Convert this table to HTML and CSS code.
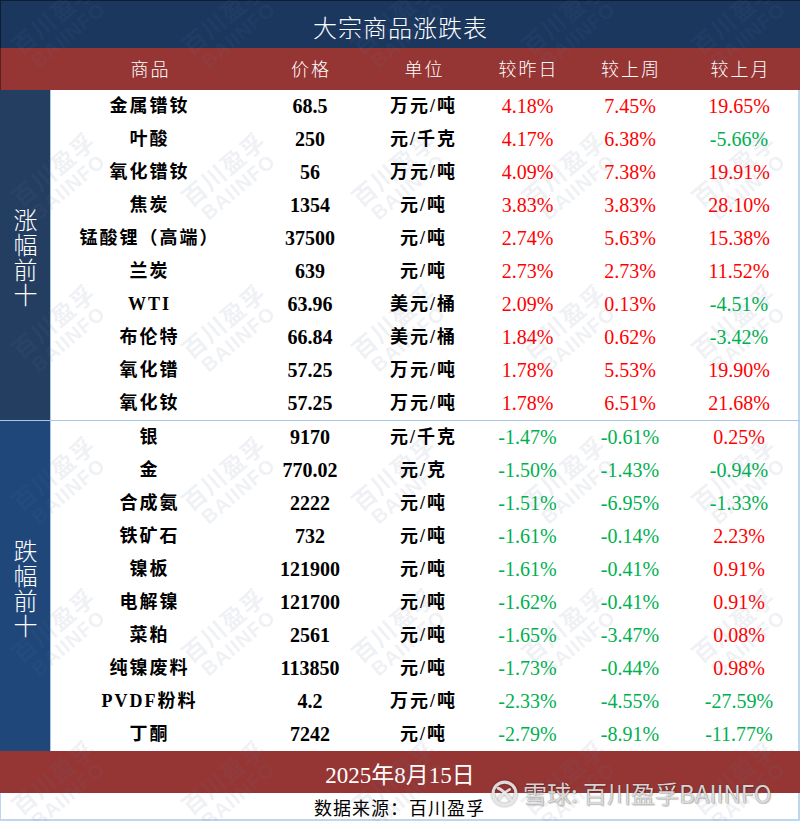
FILE: index.html
```html
<!DOCTYPE html>
<html lang="zh-CN">
<head>
<meta charset="utf-8">
<title>大宗商品涨跌表</title>
<link rel="stylesheet" href="styles.css">
</head>
<body>
<div class="sheet">
  <div class="title">大宗商品涨跌表</div>
  <div class="head">
    <div></div><div>商品</div><div>价格</div><div>单位</div><div>较昨日</div><div>较上周</div><div>较上月</div>
  </div>

  <div class="group up">
    <div class="label"><span class="label-text">涨幅前十</span></div>
    <div class="rows">
      <div class="row"><div class="name">金属镨钕</div><div class="price">68.5</div><div class="unit">万元/吨</div><div class="pct r">4.18%</div><div class="pct r">7.45%</div><div class="pct r">19.65%</div></div>
      <div class="row"><div class="name">叶酸</div><div class="price">250</div><div class="unit">元/千克</div><div class="pct r">4.17%</div><div class="pct r">6.38%</div><div class="pct g">-5.66%</div></div>
      <div class="row"><div class="name">氧化镨钕</div><div class="price">56</div><div class="unit">万元/吨</div><div class="pct r">4.09%</div><div class="pct r">7.38%</div><div class="pct r">19.91%</div></div>
      <div class="row"><div class="name">焦炭</div><div class="price">1354</div><div class="unit">元/吨</div><div class="pct r">3.83%</div><div class="pct r">3.83%</div><div class="pct r">28.10%</div></div>
      <div class="row"><div class="name">锰酸锂（高端）</div><div class="price">37500</div><div class="unit">元/吨</div><div class="pct r">2.74%</div><div class="pct r">5.63%</div><div class="pct r">15.38%</div></div>
      <div class="row"><div class="name">兰炭</div><div class="price">639</div><div class="unit">元/吨</div><div class="pct r">2.73%</div><div class="pct r">2.73%</div><div class="pct r">11.52%</div></div>
      <div class="row"><div class="name">WTI</div><div class="price">63.96</div><div class="unit">美元/桶</div><div class="pct r">2.09%</div><div class="pct r">0.13%</div><div class="pct g">-4.51%</div></div>
      <div class="row"><div class="name">布伦特</div><div class="price">66.84</div><div class="unit">美元/桶</div><div class="pct r">1.84%</div><div class="pct r">0.62%</div><div class="pct g">-3.42%</div></div>
      <div class="row"><div class="name">氧化镨</div><div class="price">57.25</div><div class="unit">万元/吨</div><div class="pct r">1.78%</div><div class="pct r">5.53%</div><div class="pct r">19.90%</div></div>
      <div class="row"><div class="name">氧化钕</div><div class="price">57.25</div><div class="unit">万元/吨</div><div class="pct r">1.78%</div><div class="pct r">6.51%</div><div class="pct r">21.68%</div></div>
    </div>
  </div>

  <div class="group down">
    <div class="label"><span class="label-text">跌幅前十</span></div>
    <div class="rows">
      <div class="row"><div class="name">银</div><div class="price">9170</div><div class="unit">元/千克</div><div class="pct g">-1.47%</div><div class="pct g">-0.61%</div><div class="pct r">0.25%</div></div>
      <div class="row"><div class="name">金</div><div class="price">770.02</div><div class="unit">元/克</div><div class="pct g">-1.50%</div><div class="pct g">-1.43%</div><div class="pct g">-0.94%</div></div>
      <div class="row"><div class="name">合成氨</div><div class="price">2222</div><div class="unit">元/吨</div><div class="pct g">-1.51%</div><div class="pct g">-6.95%</div><div class="pct g">-1.33%</div></div>
      <div class="row"><div class="name">铁矿石</div><div class="price">732</div><div class="unit">元/吨</div><div class="pct g">-1.61%</div><div class="pct g">-0.14%</div><div class="pct r">2.23%</div></div>
      <div class="row"><div class="name">镍板</div><div class="price">121900</div><div class="unit">元/吨</div><div class="pct g">-1.61%</div><div class="pct g">-0.41%</div><div class="pct r">0.91%</div></div>
      <div class="row"><div class="name">电解镍</div><div class="price">121700</div><div class="unit">元/吨</div><div class="pct g">-1.62%</div><div class="pct g">-0.41%</div><div class="pct r">0.91%</div></div>
      <div class="row"><div class="name">菜粕</div><div class="price">2561</div><div class="unit">元/吨</div><div class="pct g">-1.65%</div><div class="pct g">-3.47%</div><div class="pct r">0.08%</div></div>
      <div class="row"><div class="name">纯镍废料</div><div class="price">113850</div><div class="unit">元/吨</div><div class="pct g">-1.73%</div><div class="pct g">-0.44%</div><div class="pct r">0.98%</div></div>
      <div class="row"><div class="name">PVDF粉料</div><div class="price">4.2</div><div class="unit">万元/吨</div><div class="pct g">-2.33%</div><div class="pct g">-4.55%</div><div class="pct g">-27.59%</div></div>
      <div class="row"><div class="name">丁酮</div><div class="price">7242</div><div class="unit">元/吨</div><div class="pct g">-2.79%</div><div class="pct g">-8.91%</div><div class="pct g">-11.77%</div></div>
    </div>
  </div>

  <div class="footer">2025年8月15日</div>
  <div class="source">数据来源：百川盈孚</div>

  <div class="wm" aria-hidden="true">
    <div class="wm-cell"><div class="wm-mark"><div class="wm-cn">百川盈孚</div><div class="wm-en">BAIINFO</div></div></div>
    <div class="wm-cell"><div class="wm-mark"><div class="wm-cn">百川盈孚</div><div class="wm-en">BAIINFO</div></div></div>
    <div class="wm-cell"><div class="wm-mark"><div class="wm-cn">百川盈孚</div><div class="wm-en">BAIINFO</div></div></div>
    <div class="wm-cell"><div class="wm-mark"><div class="wm-cn">百川盈孚</div><div class="wm-en">BAIINFO</div></div></div>
    <div class="wm-cell"><div class="wm-mark"><div class="wm-cn">百川盈孚</div><div class="wm-en">BAIINFO</div></div></div>
    <div class="wm-cell"><div class="wm-mark"><div class="wm-cn">百川盈孚</div><div class="wm-en">BAIINFO</div></div></div>
    <div class="wm-cell"><div class="wm-mark"><div class="wm-cn">百川盈孚</div><div class="wm-en">BAIINFO</div></div></div>
    <div class="wm-cell"><div class="wm-mark"><div class="wm-cn">百川盈孚</div><div class="wm-en">BAIINFO</div></div></div>
    <div class="wm-cell"><div class="wm-mark"><div class="wm-cn">百川盈孚</div><div class="wm-en">BAIINFO</div></div></div>
    <div class="wm-cell"><div class="wm-mark"><div class="wm-cn">百川盈孚</div><div class="wm-en">BAIINFO</div></div></div>
    <div class="wm-cell"><div class="wm-mark"><div class="wm-cn">百川盈孚</div><div class="wm-en">BAIINFO</div></div></div>
    <div class="wm-cell"><div class="wm-mark"><div class="wm-cn">百川盈孚</div><div class="wm-en">BAIINFO</div></div></div>
    <div class="wm-cell"><div class="wm-mark"><div class="wm-cn">百川盈孚</div><div class="wm-en">BAIINFO</div></div></div>
    <div class="wm-cell"><div class="wm-mark"><div class="wm-cn">百川盈孚</div><div class="wm-en">BAIINFO</div></div></div>
    <div class="wm-cell"><div class="wm-mark"><div class="wm-cn">百川盈孚</div><div class="wm-en">BAIINFO</div></div></div>
    <div class="wm-cell"><div class="wm-mark"><div class="wm-cn">百川盈孚</div><div class="wm-en">BAIINFO</div></div></div>
    <div class="wm-cell"><div class="wm-mark"><div class="wm-cn">百川盈孚</div><div class="wm-en">BAIINFO</div></div></div>
    <div class="wm-cell"><div class="wm-mark"><div class="wm-cn">百川盈孚</div><div class="wm-en">BAIINFO</div></div></div>
    <div class="wm-cell"><div class="wm-mark"><div class="wm-cn">百川盈孚</div><div class="wm-en">BAIINFO</div></div></div>
    <div class="wm-cell"><div class="wm-mark"><div class="wm-cn">百川盈孚</div><div class="wm-en">BAIINFO</div></div></div>
    <div class="wm-cell"><div class="wm-mark"><div class="wm-cn">百川盈孚</div><div class="wm-en">BAIINFO</div></div></div>
    <div class="wm-cell"><div class="wm-mark"><div class="wm-cn">百川盈孚</div><div class="wm-en">BAIINFO</div></div></div>
    <div class="wm-cell"><div class="wm-mark"><div class="wm-cn">百川盈孚</div><div class="wm-en">BAIINFO</div></div></div>
    <div class="wm-cell"><div class="wm-mark"><div class="wm-cn">百川盈孚</div><div class="wm-en">BAIINFO</div></div></div>
    <div class="wm-cell"><div class="wm-mark"><div class="wm-cn">百川盈孚</div><div class="wm-en">BAIINFO</div></div></div>
    <div class="wm-cell"><div class="wm-mark"><div class="wm-cn">百川盈孚</div><div class="wm-en">BAIINFO</div></div></div>
    <div class="wm-cell"><div class="wm-mark"><div class="wm-cn">百川盈孚</div><div class="wm-en">BAIINFO</div></div></div>
    <div class="wm-cell"><div class="wm-mark"><div class="wm-cn">百川盈孚</div><div class="wm-en">BAIINFO</div></div></div>
    <div class="wm-cell"><div class="wm-mark"><div class="wm-cn">百川盈孚</div><div class="wm-en">BAIINFO</div></div></div>
    <div class="wm-cell"><div class="wm-mark"><div class="wm-cn">百川盈孚</div><div class="wm-en">BAIINFO</div></div></div>
  </div>

  <div class="xq">
    <svg class="xq-logo" viewBox="0 0 26 26" width="27" height="27">
      <circle cx="13" cy="13" r="11" fill="none" stroke="currentColor" stroke-width="3"/>
      <path d="M7 8 C11 9 14 13 19 19" fill="none" stroke="currentColor" stroke-width="3" stroke-linecap="round"/>
      <path d="M8 18 C10 14 13 12 18 9" fill="none" stroke="currentColor" stroke-width="2.5" stroke-linecap="round"/>
    </svg>
    <span class="xq-text">雪球: 百川盈孚BAIINFO</span>
  </div>
</div>
</body>
</html>
```

FILE: styles.css
```css
* { box-sizing: border-box; }

html, body {
  margin: 0;
  padding: 0;
  background: #ffffff;
}

.sheet {
  position: relative;
  width: 800px;
  height: 821px;
  overflow: hidden;
  background: #ffffff;
  font-family: "Liberation Serif", "Noto Sans CJK SC", serif;
  color: #000;
}

.title {
  height: 48px;
  border-top: 1px solid #0d1f36;
  border-left: 1px solid #0d1f36;
  background: #1b375e;
  color: #ffffff;
  font-family: "Noto Sans CJK SC", sans-serif;
  font-weight: 300;
  font-size: 24px;
  letter-spacing: 1px;
  display: flex;
  align-items: center;
  justify-content: center;
  padding-top: 4px;
}

.head {
  height: 42px;
  background: #963634;
  border-left: 1px solid #5a1f1e;
  color: #ffffff;
  font-family: "Noto Sans CJK SC", sans-serif;
  font-weight: 300;
  font-size: 18px;
  letter-spacing: 2px;
  display: grid;
  grid-template-columns: 51px 197px 124px 103px 105px 100px 1fr;
  align-items: center;
  text-align: center;
  padding-bottom: 3px;
}

.group {
  display: grid;
  grid-template-columns: 51px 1fr;
}

.up {
  border-bottom: 1px solid #a9c8e8;
}

.label {
  background: #243e62;
  color: #ffffff;
  border-right: 1px solid #a9c8e8;
  display: flex;
  align-items: center;
  justify-content: center;
}

.label-text {
  writing-mode: vertical-rl;
  text-orientation: upright;
  font-family: "Noto Sans CJK SC", sans-serif;
  font-weight: 300;
  font-size: 24px;
  letter-spacing: 1px;
  line-height: 30px;
  padding-top: 6px;
}

.down .label {
  background: #1f477a;
}

.rows {
  border-right: 2px solid #bdd7ee;
}

.row {
  height: 33px;
  display: grid;
  grid-template-columns: 197px 124px 103px 105px 100px 1fr;
  align-items: center;
  text-align: center;
  font-size: 20px;
  line-height: 33px;
}

.name,
.unit {
  font-weight: bold;
  font-size: 18px;
  letter-spacing: 2px;
}

.price {
  font-weight: bold;
  font-size: 20px;
}

.pct {
  font-size: 20px;
  font-weight: normal;
}

.r { color: #ff0000; }
.g { color: #00b050; }

.footer {
  height: 42px;
  background: #963634;
  color: #ffffff;
  font-size: 23px;
  display: flex;
  align-items: center;
  justify-content: center;
  padding-top: 1px;
}

.source {
  height: 28px;
  border-bottom: 2px solid #bdd7ee;
  border-right: 2px solid #bdd7ee;
  border-left: 1px solid #bdd7ee;
  font-family: "Noto Sans CJK SC", sans-serif;
  font-size: 18px;
  letter-spacing: 1px;
  display: flex;
  align-items: center;
  justify-content: center;
  padding-top: 1px;
}

/* watermark overlay */
.wm {
  position: absolute;
  left: -25px;
  top: -51px;
  display: grid;
  grid-template-columns: repeat(5, 170px);
  grid-auto-rows: 152px;
  pointer-events: none;
}

.wm-cell {
  display: flex;
  align-items: center;
  justify-content: center;
}

.wm-mark {
  transform: rotate(-40deg);
  color: rgba(90, 115, 150, 0.11);
  font-family: "Noto Sans CJK SC", sans-serif;
  font-weight: bold;
  text-align: center;
  line-height: 1.1;
}

.wm-cn {
  font-size: 24px;
  letter-spacing: 1px;
}

.wm-en {
  font-family: "Liberation Sans", sans-serif;
  font-size: 20px;
  letter-spacing: 1px;
}

/* xueqiu overlay */
.xq {
  position: absolute;
  left: 491px;
  top: 779px;
  display: flex;
  align-items: center;
  gap: 5px;
  color: rgba(236, 236, 236, 0.9);
  pointer-events: none;
}

.xq-logo {
  filter: drop-shadow(0 0 1px rgba(0, 0, 0, 0.45));
}

.xq-text {
  font-family: "Noto Sans CJK SC", sans-serif;
  font-size: 24px;
  line-height: 28px;
  text-shadow: 0 0 1px rgba(0, 0, 0, 0.55), 1px 1px 1px rgba(0, 0, 0, 0.2);
}
```
